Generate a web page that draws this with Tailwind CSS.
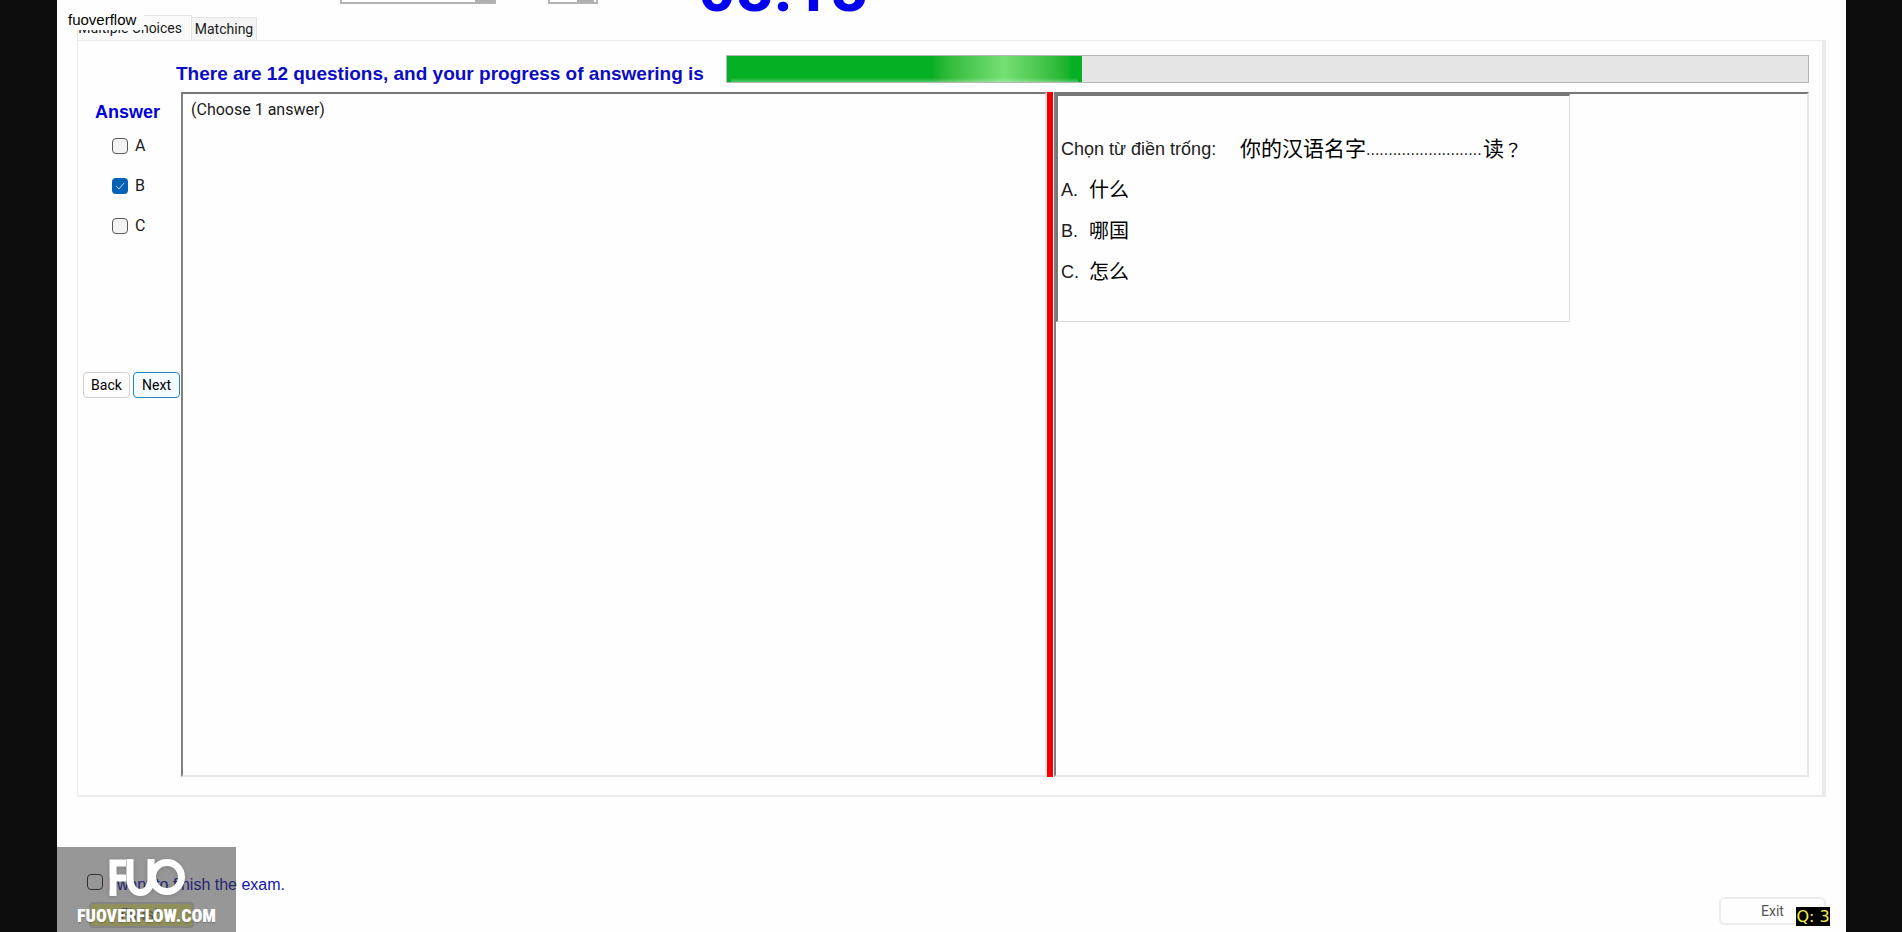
<!DOCTYPE html>
<html lang="vi">
<head>
<meta charset="utf-8">
<title>Exam</title>
<script src="https://cdn.jsdelivr.net/npm/@tailwindcss/browser@4"></script>
</head>
<body class="h-screen overflow-hidden bg-[#0d0d0d] pr-[56px] pl-[57px] font-['Roboto','Noto_Sans_CJK_SC',sans-serif] text-[#1a1a1a]">
<div class="relative flex h-full flex-col bg-[#fefefe]">
  <header class="relative h-[15px] shrink-0">
    <div class="absolute bottom-[11px] left-[283px] flex items-end gap-[52px]">
      <select aria-label="Font" class="h-6 w-[156px] appearance-none border-2 border-[#b4b4b4] bg-white"><option></option></select>
      <select aria-label="Size" class="h-6 w-[50px] appearance-none border-2 border-[#b4b4b4] bg-white"><option></option></select>
    </div>
    <div class="absolute bottom-[12px] left-[418px] h-[3px] w-[19px] bg-[#b0b0b0]"></div>
    <div class="absolute bottom-[12px] left-[520px] h-[3px] w-[17px] bg-[#b0b0b0]"></div>
    <div class="absolute bottom-[-7px] left-[641px] font-['Roboto',sans-serif] text-[66px] leading-[66px] font-bold text-[#0000f0]">08:18</div>
  </header>

  <main class="mr-5 ml-5 flex h-[782px] shrink-0 flex-col">
    <nav class="flex h-[25px] shrink-0 items-end text-sm leading-5">
      <button class="h-[25px] w-[115px] border border-b-0 border-[#e4e4e4] bg-[#fafafa] pr-[9px] text-right whitespace-nowrap">Multiple Choices</button>
      <button class="h-[23px] w-[65px] border border-l-0 border-b-0 border-[#e4e4e4] bg-[#f4f4f4] text-center">Matching</button>
    </nav>
    <section class="flex min-h-0 flex-1 flex-col border border-r-4 border-b-2 border-[#ebebeb] pr-[13px] pb-[18px]">
      <div class="mt-[14px] flex h-7 shrink-0 items-end gap-5 pl-[98px]">
        <span id="pl" class="w-[530px] shrink-0 font-['Liberation_Sans',sans-serif] text-[19px] leading-[18px] font-bold whitespace-nowrap text-[#0c0cc4]">There are 12 questions, and your progress of answering is</span>
        <div role="progressbar" aria-labelledby="pl" class="h-[28px] flex-1 border border-[#b4b8b4] bg-[#e5e5e5]">
          <div class="relative h-full bg-linear-to-r from-[#06b025] from-58% via-[#74e074] via-78% to-[#06b025] to-97%" style="width:32.8%"><div class="absolute inset-x-1 bottom-0 h-1 bg-linear-to-b from-white/0 to-white/30"></div></div>
        </div>
      </div>
      <div class="mt-[9px] flex min-h-0 flex-1">
        <aside class="flex w-[103px] shrink-0 flex-col pl-[5px]">
          <h2 class="mt-[10px] pl-3 font-['Liberation_Sans',sans-serif] text-lg leading-5 font-bold text-[#0000d8]">Answer</h2>
          <div class="mt-[14px] flex flex-col gap-5 pl-[29px] text-base leading-5">
            <label class="flex items-center gap-[7px]"><input type="checkbox" class="size-4 appearance-none rounded border border-[#5a5a5a] bg-[#f3f3f3]">A</label>
            <label class="relative flex items-center gap-[7px]"><input type="checkbox" checked class="size-4 appearance-none rounded bg-[#0560b8]"><svg class="absolute left-0 size-4" viewBox="0 0 16 16" fill="none" stroke="#b8dcf8"><path d="M4 8l3 3 5-6"/></svg>B</label>
            <label class="flex items-center gap-[7px]"><input type="checkbox" class="size-4 appearance-none rounded border border-[#5a5a5a] bg-[#f3f3f3]">C</label>
          </div>
          <div class="mt-[136px] flex gap-[3px] text-sm leading-5 text-black">
            <button class="h-[26px] w-[47px] rounded border border-[#cfcfcf] bg-[#fdfdfd]">Back</button>
            <button class="h-[26px] w-[47px] rounded border border-[#2585c5] bg-[#f4fbff]">Next</button>
          </div>
        </aside>
        <div class="flex min-w-0 flex-1">
          <div class="w-[866px] shrink-0 border-2 border-[#e8e8e8] border-t-[#777] border-l-[#808080] pt-[6px] pl-2 text-base leading-5">(Choose 1 answer)</div>
          <div class="w-[6px] shrink-0 bg-[#f50000]"></div>
          <div class="ml-px min-w-0 flex-1 border-2 border-[#e8e8e8] border-t-[#777] border-l-[#808080]">
            <article class="h-[228px] w-[514px] border-2 border-r border-b border-[#dcdcdc] border-t-[#777] border-l-[#777] pt-[33px] pl-[3px] font-['Liberation_Sans','Noto_Sans_CJK_SC',sans-serif] text-lg leading-[41px] text-[#202020]">
              <p class="flex whitespace-nowrap"><span class="w-[179px]">Chọn từ điền trống:</span><span lang="zh-CN" class="text-[21px] leading-10 text-black">你的汉语名字</span><span class="w-[117px] overflow-hidden text-base leading-[41px]">..........................</span><span lang="zh-CN" class="text-[21px] leading-10 text-black">读</span><span class="font-['Noto_Sans_CJK_TC',sans-serif] text-lg leading-10 text-black" lang="zh-TW">？</span></p>
              <p class="flex"><span class="w-7">A.</span><span class="text-[20px] text-black">什么</span></p>
              <p class="flex"><span class="w-7">B.</span><span class="text-[20px] text-black">哪国</span></p>
              <p class="flex"><span class="w-7">C.</span><span class="text-[20px] text-black">怎么</span></p>
            </article>
          </div>
        </div>
      </div>
    </section>
  </main>

  <footer class="flex flex-1 items-end justify-between pr-5 pl-[30px]">
    <div class="flex flex-col items-start">
      <label class="flex items-start gap-[5px] font-['Liberation_Sans',sans-serif] text-base leading-6 whitespace-nowrap text-[#1414b4]"><input type="checkbox" class="mt-px size-4 appearance-none rounded border border-[#333]">I want to finish the exam.</label>
      <button class="mt-[5px] mb-1 ml-[2px] h-[26px] w-[105px] rounded border-2 border-[#d8d8d8] bg-[#f0f088] text-base leading-4 text-[#777]">Finish</button>
    </div>
    <button class="mb-[7px] h-7 w-[107px] rounded-md border-2 border-[#ececec] bg-[#fefefe] text-sm text-[#555]">Exit</button>
  </footer>

  <div class="absolute top-[12px] left-1 h-[18px] w-[83px] bg-white pl-[7px] font-['Liberation_Sans',sans-serif] text-[15px] leading-4 text-black">fuoverflow</div>
  <div class="absolute right-[16px] bottom-[6px] h-[19px] w-[34px] bg-black text-center font-['DejaVu_Sans',sans-serif] text-base leading-5 whitespace-nowrap text-[#f4f04a]">Q: 3</div>
  <div class="absolute bottom-0 left-0 flex h-[85px] w-[179px] flex-col items-center bg-[#303030]/50">
    <svg class="mt-3 h-[38px] w-[78px] shrink-0 drop-shadow-sm" viewBox="0 0 78 38" fill="none" stroke="#fff" stroke-width="7">
      <path d="M5 37V4H18M5 19H18M22 0V20C22 38 43 38 43 20V0"/>
      <circle cx="59" cy="18" r="14.500"/>
    </svg>
    <div class="mt-[7px] text-center font-['Impact','Roboto_Condensed','Roboto',sans-serif] text-lg leading-6 font-black text-white text-shadow-sm">FUOVERFLOW.COM</div>
  </div>
</div>
</body>
</html>
